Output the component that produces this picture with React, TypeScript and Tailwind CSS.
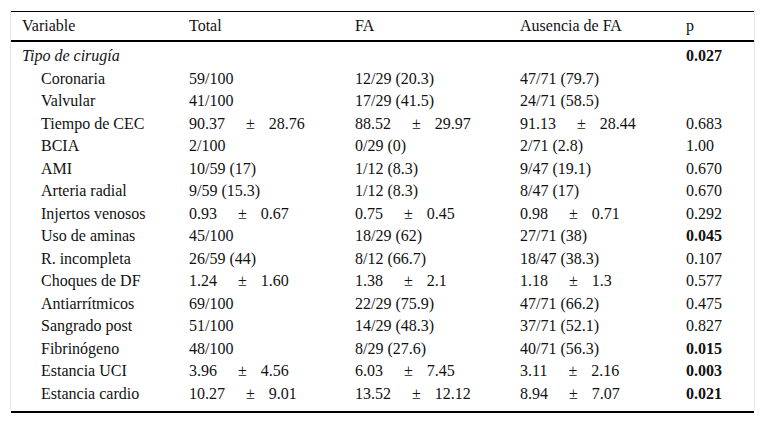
const rows: { label: string; total: string[]; fa: string[]; aus: string[]; p: string; bold?: boolean }[] = [
  { label: 'Coronaria', total: ['59/100'], fa: ['12/29 (20.3)'], aus: ['47/71 (79.7)'], p: '' },
  { label: 'Valvular', total: ['41/100'], fa: ['17/29 (41.5)'], aus: ['24/71 (58.5)'], p: '' },
  { label: 'Tiempo de CEC', total: ['90.37', '28.76'], fa: ['88.52', '29.97'], aus: ['91.13', '28.44'], p: '0.683' },
  { label: 'BCIA', total: ['2/100'], fa: ['0/29 (0)'], aus: ['2/71 (2.8)'], p: '1.00' },
  { label: 'AMI', total: ['10/59 (17)'], fa: ['1/12 (8.3)'], aus: ['9/47 (19.1)'], p: '0.670' },
  { label: 'Arteria radial', total: ['9/59 (15.3)'], fa: ['1/12 (8.3)'], aus: ['8/47 (17)'], p: '0.670' },
  { label: 'Injertos venosos', total: ['0.93', '0.67'], fa: ['0.75', '0.45'], aus: ['0.98', '0.71'], p: '0.292' },
  { label: 'Uso de aminas', total: ['45/100'], fa: ['18/29 (62)'], aus: ['27/71 (38)'], p: '0.045', bold: true },
  { label: 'R. incompleta', total: ['26/59 (44)'], fa: ['8/12 (66.7)'], aus: ['18/47 (38.3)'], p: '0.107' },
  { label: 'Choques de DF', total: ['1.24', '1.60'], fa: ['1.38', '2.1'], aus: ['1.18', '1.3'], p: '0.577' },
  { label: 'Antiarrítmicos', total: ['69/100'], fa: ['22/29 (75.9)'], aus: ['47/71 (66.2)'], p: '0.475' },
  { label: 'Sangrado post', total: ['51/100'], fa: ['14/29 (48.3)'], aus: ['37/71 (52.1)'], p: '0.827' },
  { label: 'Fibrinógeno', total: ['48/100'], fa: ['8/29 (27.6)'], aus: ['40/71 (56.3)'], p: '0.015', bold: true },
  { label: 'Estancia UCI', total: ['3.96', '4.56'], fa: ['6.03', '7.45'], aus: ['3.11', '2.16'], p: '0.003', bold: true },
  { label: 'Estancia cardio', total: ['10.27', '9.01'], fa: ['13.52', '12.12'], aus: ['8.94', '7.07'], p: '0.021', bold: true },
];

function Val({ v }: { v: string[] }) {
  if (v.length === 1) return <span>{v[0]}</span>;
  return (
    <span className="flex">
      <span>{v[0]}</span>
      <span className="ml-[21px]">±</span>
      <span className="ml-[14px]">{v[1]}</span>
    </span>
  );
}

const cols = 'grid grid-cols-[167px_166px_165px_166px_1fr] items-center pl-[11px]';

export default function App() {
  return (
    <div className="w-[765px] h-[423px] bg-white text-[16px] text-[#111] font-['Liberation_Serif',serif] leading-none">
      <div className="pt-[10px] pl-[10px]">
        <div className="w-[745px] border-x border-[#e4e4e4] pt-[1px] pb-[5px]">
          <div className="border-t border-black">
            {/* header */}
            <div className={`${cols} h-[30px] border-b-2 border-black`}>
              <span>Variable</span>
              <span>Total</span>
              <span>FA</span>
              <span>Ausencia de FA</span>
              <span>p</span>
            </div>

            <div className="pt-[3px]">
              <div className={`${cols} h-[22.5px]`}>
                <span className="italic">Tipo de cirugía</span>
                <span />
                <span />
                <span />
                <span className="font-bold">0.027</span>
              </div>

              {rows.map((r) => (
                <div key={r.label} className={`${cols} h-[22.5px]`}>
                  <span className="pl-[19px]">{r.label}</span>
                  <Val v={r.total} />
                  <Val v={r.fa} />
                  <Val v={r.aus} />
                  <span className={r.bold ? 'font-bold' : ''}>{r.p}</span>
                </div>
              ))}
            </div>
          </div>
        </div>
        <div className="ml-[1px] w-[743px] h-[1.5px] bg-black mt-[1px]" />
      </div>
    </div>
  );
}
